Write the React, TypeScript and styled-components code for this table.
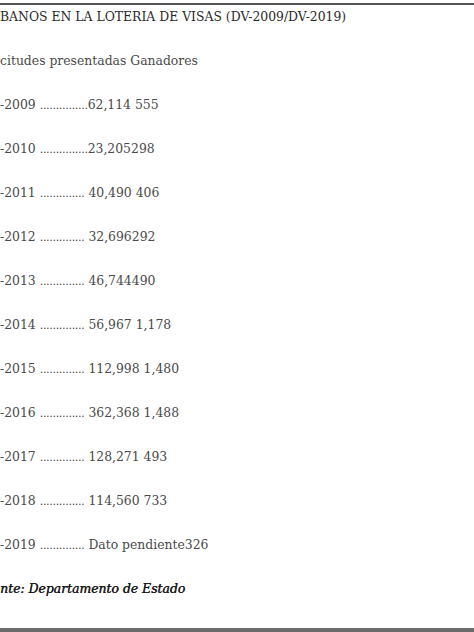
import React from "react";
import styled, { createGlobalStyle } from "styled-components";

const Global = createGlobalStyle`
  html, body { margin: 0; padding: 0; background: #ffffff; }
  body { width: 474px; height: 632px; overflow: hidden; }
`;

const Frame = styled.div`
  box-sizing: border-box;
  margin-top: 3px;
  height: 629px;
  border-top: 2px solid #555555;
  border-bottom: 4px solid #6b6b6b;
  display: flex;
  flex-direction: column;
  gap: 20px;
  font-family: "DejaVu Serif", "Liberation Serif", serif;
  overflow: hidden;
`;

const Line = styled.div<{ $tone?: "title" | "body" | "source" }>`
  height: 24px;
  line-height: 24px;
  white-space: nowrap;
  font-size: 12.4px;
  color: ${(p) => (p.$tone === "title" ? "#2a2a2a" : p.$tone === "source" ? "#1a1a1a" : "#4a4a4a")};
  font-style: ${(p) => (p.$tone === "source" ? "italic" : "normal")};
  font-weight: 400;
  text-shadow: ${(p) => (p.$tone === "source" ? "0.45px 0 0 currentColor" : "none")};
`;

const Leader = styled.span`
  letter-spacing: -0.3px;
  font-size: 11px;
`;

const rows: [string, string, string][] = [
  ["-2009", "...............", "62,114 555"],
  ["-2010", "...............", "23,205298"],
  ["-2011", "..............", " 40,490 406"],
  ["-2012", "..............", " 32,696292"],
  ["-2013", "..............", " 46,744490"],
  ["-2014", "..............", " 56,967 1,178"],
  ["-2015", "..............", " 112,998 1,480"],
  ["-2016", "..............", " 362,368 1,488"],
  ["-2017", "..............", " 128,271 493"],
  ["-2018", "..............", " 114,560 733"],
  ["-2019", "..............", " Dato pendiente326"],
];

export default function App() {
  return (
    <>
      <Global />
      <Frame>
        <Line $tone="title">BANOS EN LA LOTERIA DE VISAS (DV-2009/DV-2019)</Line>
        <Line>citudes presentadas Ganadores</Line>
        {rows.map(([year, dots, value]) => (
          <Line key={year}>
            {year} <Leader>{dots}</Leader>
            {value}
          </Line>
        ))}
        <Line $tone="source">nte: Departamento de Estado</Line>
      </Frame>
    </>
  );
}
